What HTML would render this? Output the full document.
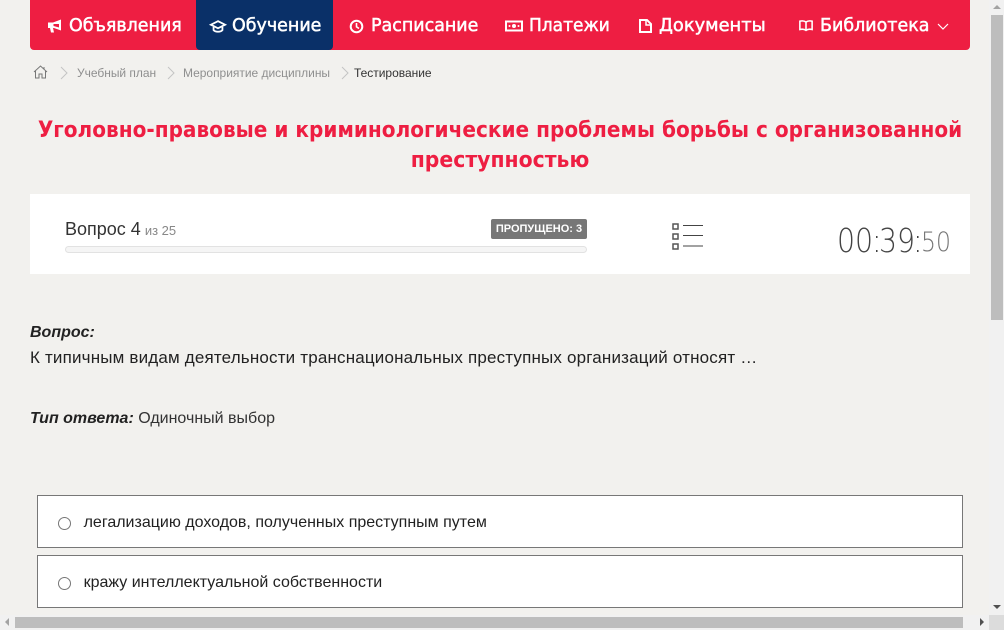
<!DOCTYPE html>
<html lang="ru"><head><meta charset="utf-8"><title>Тестирование</title>
<style>
html,body{margin:0;padding:0;width:1004px;height:630px;overflow:hidden;background:#f2f1ee}
body{position:relative;font-family:"Liberation Sans",sans-serif;color:#212121}
.a{position:absolute;white-space:nowrap}
.nav{font-family:"DejaVu Sans",sans-serif;font-size:18px;font-weight:400;color:#fff;top:14px;line-height:24px;-webkit-text-stroke:.5px #fff;transform-origin:0 50%}
.bc{font-size:12px;line-height:14px;top:66px;color:#8f8f8f;letter-spacing:-.02px}
.tt{font-family:"DejaVu Sans",sans-serif;font-weight:700;font-size:22px;color:#ee1e42;line-height:30px;left:-100px;width:1200px;text-align:center;transform:scaleX(.912);transform-origin:50% 50%}
.tm{font-family:"DejaVu Sans",sans-serif;font-weight:200;font-size:33px;line-height:40px;color:#444;top:221px;transform:scaleX(.86);transform-origin:0 50%}
.opt{position:absolute;left:37px;width:924px;height:51px;background:#fff;border:1px solid #777}
.opt i{position:absolute;left:20px;top:21px;width:11px;height:11px;border:1px solid #767676;border-radius:50%;background:#fff}
.opt span{position:absolute;left:45.600px;top:18px;font-size:16px;line-height:18px;color:#222;white-space:nowrap}
svg{position:absolute;overflow:visible}
</style></head><body>
<div class="a" style="left:30px;top:0;width:940px;height:50px;background:#ee1e42;border-radius:0 0 4px 4px"></div>
<div class="a" style="left:196px;top:0;width:137px;height:50px;background:#0a3068;border-radius:0 0 4px 4px"></div>

<svg style="left:47px;top:18px" width="16" height="16" viewBox="0 0 16 16"><path d="M1 4.500h5L14 1.500v11L7 10H6l1 4.500H4L3 10H1z" fill="#fff"/><path d="M6.500 6h5.500v3.500L6.500 8z" fill="#ee1e42"/></svg>
<div class="a nav" style="left:69px;transform:scaleX(.97)">Объявления</div>
<svg style="left:210px;top:19px" width="16" height="15" viewBox="0 0 18 16"><path d="M9 2L1 6l8 4 8-4z" fill="none" stroke="#fff" stroke-width="2"/><path d="M4 8.500v3.500c2 2.500 8 2.500 10 0V8.500" fill="none" stroke="#fff" stroke-width="2"/></svg>
<div class="a nav" style="left:232px;transform:scaleX(.97)">Обучение</div>
<svg style="left:349px;top:19px" width="15" height="15" viewBox="0 0 15 15"><circle cx="7.500" cy="7.500" r="5.800" fill="none" stroke="#fff" stroke-width="2"/><path d="M7.500 4v3.800l2.500 1.700" fill="none" stroke="#fff" stroke-width="1.600"/></svg>
<div class="a nav" style="left:371px;transform:scaleX(.97)">Расписание</div>
<svg style="left:505px;top:20px" width="18" height="12" viewBox="0 0 18 12"><rect x="1" y="1.500" width="16" height="9" fill="none" stroke="#fff" stroke-width="2"/><circle cx="9" cy="6" r="2" fill="#fff"/><circle cx="4.500" cy="6" r="1" fill="#fff"/><circle cx="13.500" cy="6" r="1" fill="#fff"/></svg>
<div class="a nav" style="left:529px;transform:scaleX(.945)">Платежи</div>
<svg style="left:639px;top:19px" width="13" height="14" viewBox="0 0 13 14"><path d="M1 1h7l4 4v8H1z" fill="none" stroke="#fff" stroke-width="2"/><path d="M7 1v5h5" fill="none" stroke="#fff" stroke-width="1.500"/></svg>
<div class="a nav" style="left:659px;transform:scaleX(.99)">Документы</div>
<svg style="left:799px;top:19px" width="14" height="14" viewBox="0 0 16 14"><path d="M8 2.500C6 1 3 1 1 1.500v9.500c2-.5 5-.5 7 1 2-1.500 5-1.500 7-1V1.500C13 1 10 1 8 2.500zV12" fill="none" stroke="#fff" stroke-width="1.800"/></svg>
<div class="a nav" style="left:820px;transform:scaleX(.97)">Библиотека</div>
<svg style="left:937px;top:23px" width="12" height="7" viewBox="0 0 12 7"><path d="M1 1l5 5 5-5" fill="none" stroke="#fff" stroke-width="1.200"/></svg>

<svg style="left:33px;top:65px" width="15" height="14" viewBox="0 0 15 14"><path d="M1 7L7.500 1 14 7M2.500 6v7h3.500V9h3v4h3.500V6M11 2v2" fill="none" stroke="#777" stroke-width="1"/></svg>
<svg style="left:60px;top:66px" width="8" height="14" viewBox="0 0 8 14"><path d="M1 1l6 6-6 6" fill="none" stroke="#c4c4c4"/></svg>
<div class="a bc" style="left:77px">Учебный план</div>
<svg style="left:167px;top:66px" width="8" height="14" viewBox="0 0 8 14"><path d="M1 1l6 6-6 6" fill="none" stroke="#c4c4c4"/></svg>
<div class="a bc" style="left:183px">Мероприятие дисциплины</div>
<svg style="left:341px;top:66px" width="8" height="14" viewBox="0 0 8 14"><path d="M1 1l6 6-6 6" fill="none" stroke="#c4c4c4"/></svg>
<div class="a bc" style="left:354px;color:#333">Тестирование</div>

<div class="a tt" style="top:116px">Уголовно-правовые и криминологические проблемы борьбы с организованной</div>
<div class="a tt" style="top:146px;transform:scaleX(.927)">преступностью</div>

<div class="a" style="left:30px;top:194px;width:940px;height:80px;background:#fff"></div>
<div class="a" style="left:65px;top:218px;font-size:18px;line-height:22px;color:#333">Вопрос 4 <span style="font-size:13px;color:#888;margin-left:-1px">из 25</span></div>
<div class="a" style="left:491px;top:219px;width:96px;height:20px;background:#777;border-radius:2px;color:#fff;font-size:11px;font-weight:700;line-height:21px;text-align:center">ПРОПУЩЕНО: 3</div>
<div class="a" style="left:65px;top:246px;width:520px;height:5px;background:#f5f5f5;border:1px solid #e2e2e2;border-radius:4px"></div>
<svg style="left:672px;top:222px" width="32" height="28" viewBox="0 0 32 28"><g fill="none" stroke="#555" stroke-width="1.500"><rect x="1" y="2" width="5" height="5"/><rect x="1" y="12" width="5" height="5"/><rect x="1" y="22" width="5" height="5"/></g><path d="M11 3.500h20M11 13.500h20M11 24h20" stroke="#444" stroke-width="1"/></svg>
<div class="a tm" style="left:837px">00</div>
<div class="a tm" style="left:872px;color:#333">:</div>
<div class="a tm" style="left:879px">39</div>
<div class="a tm" style="left:913px;color:#333">:</div>
<div class="a" style="left:921px;top:223px;font-family:'DejaVu Sans',sans-serif;font-weight:200;font-size:27px;line-height:40px;color:#777;transform:scaleX(.87);transform-origin:0 50%">50</div>

<div class="a" style="left:30px;top:323px;font-size:16px;line-height:20px;font-weight:700;font-style:italic;color:#222">Вопрос:</div>
<div class="a" style="left:30px;top:348px;font-size:17px;line-height:20px;letter-spacing:.175px;color:#222">К типичным видам деятельности транснациональных преступных организаций относят …</div>
<div class="a" style="left:30px;top:409px;font-size:16px;line-height:20px;color:#333"><b style="color:#222"><i>Тип ответа:</i></b> Одиночный выбор</div>

<div class="opt" style="top:495px"><i></i><span>легализацию доходов, полученных преступным путем</span></div>
<div class="opt" style="top:555px"><i></i><span>кражу интеллектуальной собственности</span></div>

<div class="a" style="left:989px;top:0;width:15px;height:615px;background:#f1f1f1"></div>
<div class="a" style="left:991px;top:15px;width:12px;height:305px;background:#bdbdbd"></div>
<div class="a" style="left:0;top:615px;width:989px;height:15px;background:#f1f1f1"></div>
<div class="a" style="left:15px;top:617px;width:948px;height:11px;background:#bdbdbd"></div>
<div class="a" style="left:989px;top:615px;width:15px;height:15px;background:#dcdcdc"></div>
<svg style="left:993px;top:4px" width="8" height="6"><path d="M0 5L4 1l4 4z" fill="#a3a3a3"/></svg>
<svg style="left:993px;top:604px" width="8" height="6"><path d="M0 1h8L4 5z" fill="#505050"/></svg>
<svg style="left:4px;top:618px" width="6" height="8"><path d="M5 0v8L1 4z" fill="#a3a3a3"/></svg>
<svg style="left:979px;top:618px" width="6" height="8"><path d="M1 0v8l4-4z" fill="#505050"/></svg>
</body></html>
